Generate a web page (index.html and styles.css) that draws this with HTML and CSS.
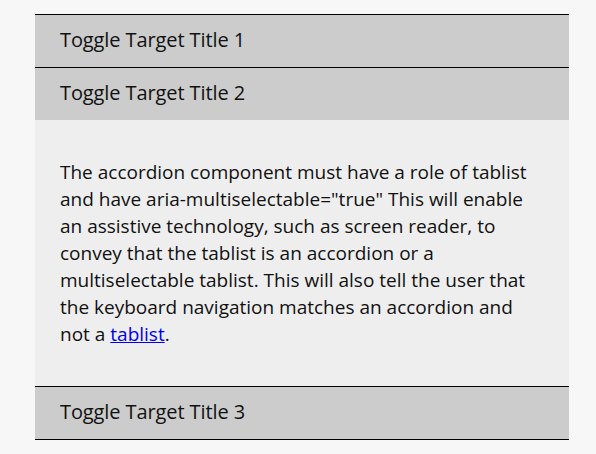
FILE: index.html
```html
<!DOCTYPE html>
<html lang="en">
<head>
<meta charset="utf-8">
<title>Accordion</title>
<link rel="stylesheet" href="styles.css">
</head>
<body>
<div class="accordion" role="tablist" aria-multiselectable="true">
  <div class="header" role="tab">Toggle Target Title 1</div>
  <div class="header" role="tab">Toggle Target Title 2</div>
  <div class="panel" role="tabpanel">
    <p>The accordion component must have a role of tablist and have aria-multiselectable="true" This will enable an assistive technology, such as screen reader, to convey that the tablist is an accordion or a multiselectable tablist. This will also tell the user that the keyboard navigation matches an accordion and not a <a href="#">tablist</a>.</p>
  </div>
  <div class="header" role="tab">Toggle Target Title 3</div>
</div>
</body>
</html>
```
FILE: styles.css
```css
html, body {
  margin: 0;
  padding: 0;
  background: #f7f7f7;
}
body {
  font-family: "Open Sans", "Noto Sans", sans-serif;
  color: #111;
}
.accordion {
  margin: 14px 0 0 35px;
  width: 534px;
  border-bottom: 1px solid #000;
}
.header {
  background: #cccccc;
  border-top: 1px solid #000;
  padding: 0 25px 2px;
  height: 50px;
  line-height: 50px;
  font-size: 20px;
  letter-spacing: -0.1px;
}
.panel {
  background: #eeeeee;
  padding: 39px 25px 38px;
}
.panel p {
  margin: 0;
  font-size: 19px;
  line-height: 27px;
  letter-spacing: 0;
}
.panel a {
  color: #0000ee;
}
```
